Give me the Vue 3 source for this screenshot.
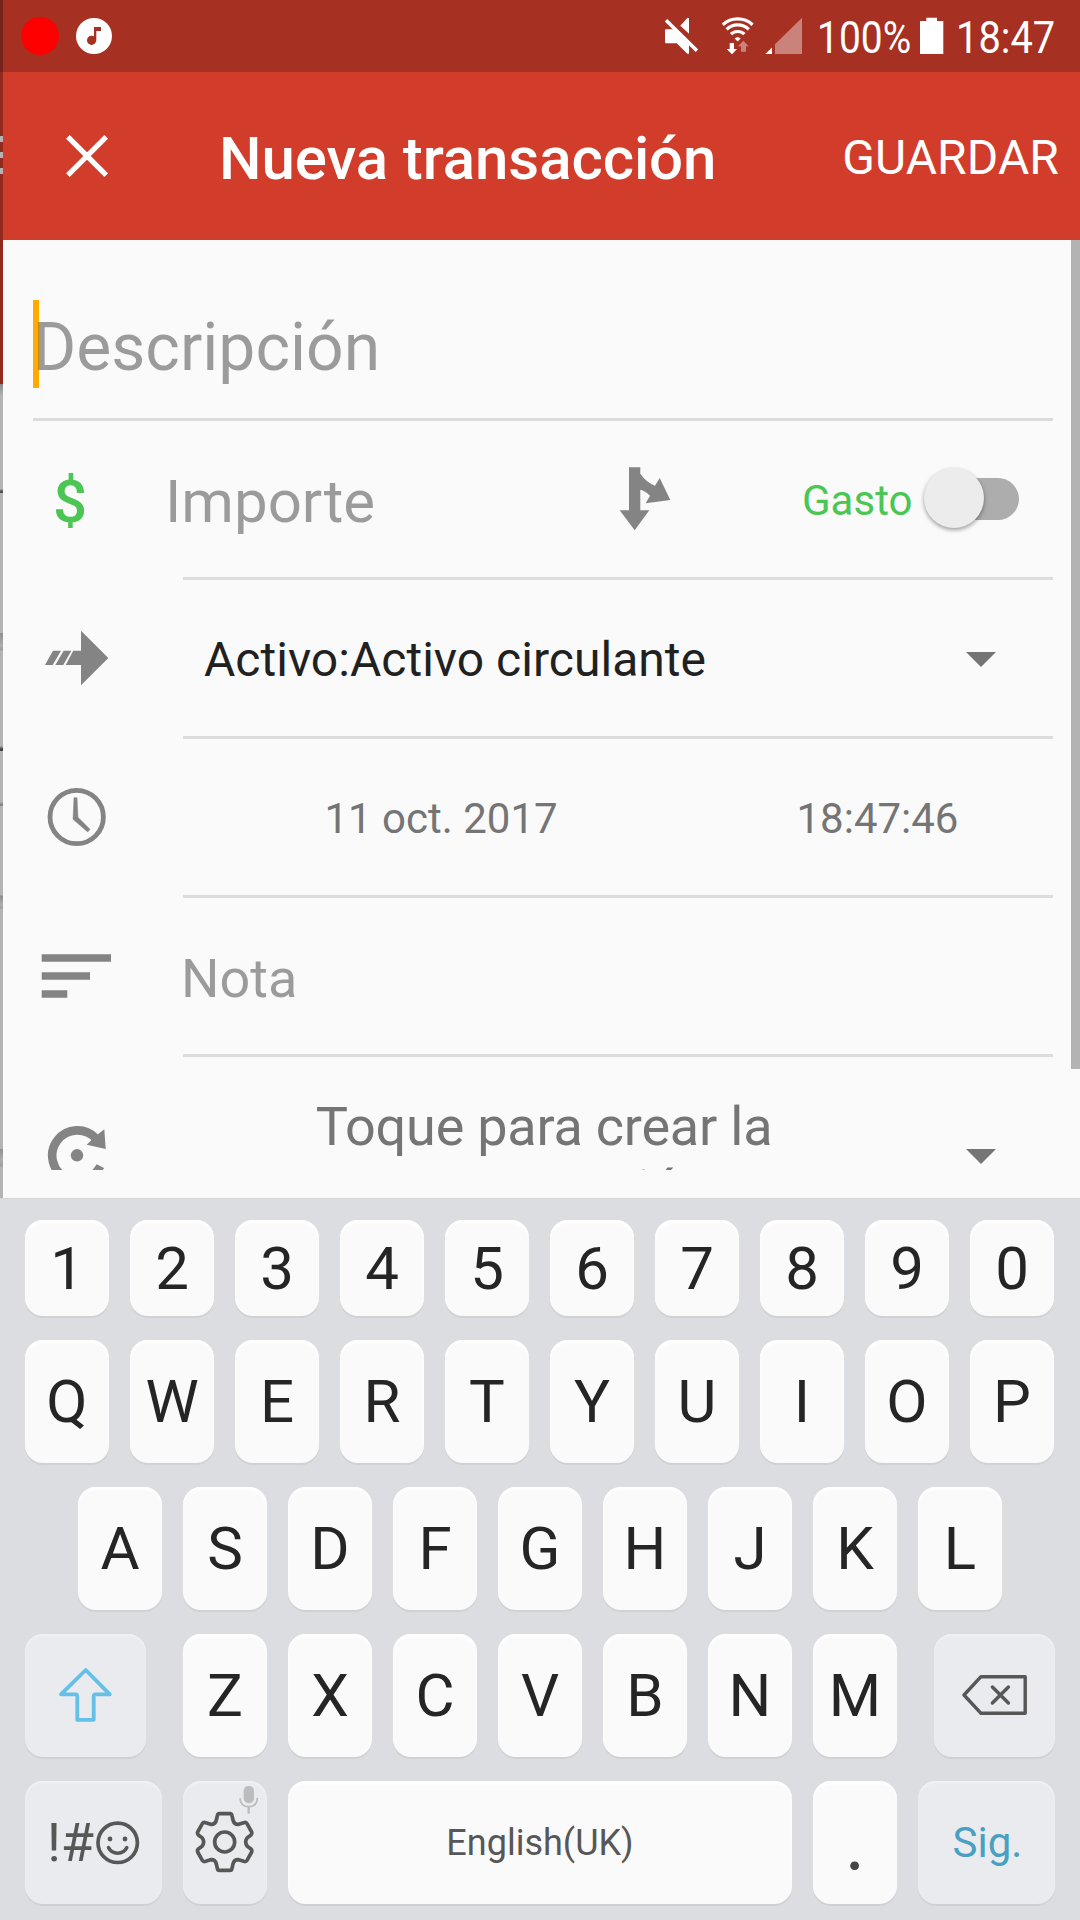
<script setup>
const digits = [...'1234567890']
const top = [...'QWERTYUIOP']
const middle = [...'ASDFGHJKL']
const bottom = [...'ZXCVBNM']
</script>

<template>
  <div class="screen">
    <div class="app">
      <div class="edge"></div>
      <div class="activity">
        <header class="status">
          <svg class="notif" viewBox="3 0 120 72" width="120" height="72">
            <circle cx="40" cy="36" r="19" fill="#ff0000" />
            <circle cx="94" cy="36" r="18" fill="#fff" />
            <path d="M94 27H101V31H96.3V40.3H94Z" fill="#a63021" />
            <circle cx="91.6" cy="40.3" r="4.6" fill="#a63021" />
          </svg>
          <svg viewBox="660 0 150 72" width="150" height="72">
            <path d="M665 30.3Q665 29.3 666 29.3H675L689 43.5V53.7H687.3L676.7 43.3H666Q665 43.3 665 42.3ZM689 18V33.7L680.3 25.7L687.3 18Z" fill="#fff" />
            <path d="M666 20.3L697 50.8" stroke="#fff" stroke-width="3.6" />
            <g fill="none" stroke="#fff" stroke-width="3.2">
              <path d="M722.8 24.7A22 22 0 0 1 752.6 24.7" />
              <path d="M726.6 29.4A16 16 0 0 1 748.8 29.4" />
              <path d="M731 34.2A9.6 9.6 0 0 1 744.4 34.2" />
            </g>
            <path d="M734.6 38.6Q737.7 36 740.7 38.6L737.7 41.6Z" fill="#fff" />
            <path d="M729.7 43H734V49H737L732 54.2L726.7 49H729.7Z" fill="#fff" />
            <path d="M743.3 40.7L748.7 46.2H746V51.8H741V46.2H738Z" fill="#c9837a" />
            <path d="M765.3 54L772 47.5V54Z" fill="#fff" />
            <path d="M775 54V44.3L802 17.7V54Z" fill="#c9837a" />
          </svg>
          <span class="stat battery-text">100%</span>
          <svg viewBox="915 0 43 72" width="43" height="72">
            <path d="M920 21H926.3V17.7H937V21H943.3V54H920Z" fill="#fff" />
          </svg>
          <span class="stat clock-text">18:47</span>
        </header>

        <div class="toolbar">
          <svg viewBox="3 72 210 168" width="210" height="168">
            <path d="M67.9 136.8L106.2 175.1M106.2 136.8L67.9 175.1" stroke="#fff" stroke-width="5.2" />
          </svg>
          <h1>Nueva transacción</h1>
          <span class="save">GUARDAR</span>
        </div>

        <main class="form">
          <div class="row description">
            <span class="caret"></span>
            <span class="hint big">Descripción</span>
          </div>
          <div class="rule full"></div>

          <div class="row">
            <span class="currency">$</span>
            <span class="hint amount">Importe</span>
            <svg class="split" viewBox="610 421 70 156" width="70" height="156">
              <path d="M629 467.3H640.3V473.7Q646 482 655 485.7L659.7 478L670.3 500L645.7 503.3L650 495.7Q645 490.5 640.3 489.7V510.3H649.3L634.7 530.3L619.7 510.3H629Z" fill="#848484" />
            </svg>
            <span class="type">Gasto</span>
            <span class="switch"><span class="thumb"></span></span>
          </div>
          <div class="rule"></div>

          <div class="row">
            <svg class="icon" viewBox="33 580 150 156" width="150" height="156">
              <path d="M81 630.7L108.3 658L81 685.3V665H65.7L73.3 650.7H81ZM63.7 650.7H71.3L63.3 665H55.3ZM53 650.7H61L52.7 665H45Z" fill="#848484" />
            </svg>
            <span class="account">Activo:Activo circulante</span>
            <svg class="drop" viewBox="966 0 30 15" width="30" height="15"><path d="M966 0H996L981 15Z" fill="#757575" /></svg>
          </div>
          <div class="rule"></div>

          <div class="row">
            <svg class="icon" viewBox="33 739 150 156" width="150" height="156">
              <circle cx="76.7" cy="817" r="26.7" fill="none" stroke="#848484" stroke-width="4.8" />
              <path d="M74 797.7H77L78 817.3L90 829.3L87.7 832L73 819.3Z" fill="#848484" stroke="#848484" stroke-width=".5" stroke-linejoin="round" />
            </svg>
            <span class="date">11 oct. 2017</span>
            <span class="time">18:47:46</span>
          </div>
          <div class="rule"></div>

          <div class="row">
            <svg class="icon" viewBox="33 898 150 156" width="150" height="156">
              <path d="M41.7 954.3H111V961.7H41.7ZM41.7 972.2H90V979.8H41.7ZM41.7 990.2H67.3V997.8H41.7Z" fill="#848484" />
            </svg>
            <span class="hint note">Nota</span>
          </div>
          <div class="rule"></div>

          <div class="row recurrence">
            <svg class="icon" viewBox="33 1057 150 113" width="150" height="113">
              <path d="M66 1178A25.2 25.2 0 1 1 96 1138.5" fill="none" stroke="#848484" stroke-width="8.6" />
              <circle cx="77" cy="1155.3" r="6.2" fill="#848484" />
              <path d="M104.3 1129.3L105.7 1149L86.7 1144.7L92 1139.5L98.3 1134ZM96.7 1164.3L104 1168L102.5 1171H91.8Z" fill="#848484" />
            </svg>
            <span class="repeat">Toque para crear la programación</span>
            <svg class="drop" viewBox="966 0 30 15" width="30" height="15"><path d="M966 0H996L981 15Z" fill="#757575" /></svg>
          </div>
          <div class="scrollbar"></div>
        </main>
      </div>
    </div>

    <div class="keyboard">
      <div class="keys digits"><span v-for="k in digits" :key="k" class="key">{{ k }}</span></div>
      <div class="keys"><span v-for="k in top" :key="k" class="key">{{ k }}</span></div>
      <div class="keys mid"><span v-for="k in middle" :key="k" class="key">{{ k }}</span></div>
      <div class="keys">
        <span class="key fn shift">
          <svg viewBox="25 1634 121 123" width="121" height="123">
            <path d="M85.7 1670L109.8 1694.3H95.7Q93.7 1694.3 93.7 1696.3V1719.8H77.3V1696.3Q77.3 1694.3 75.3 1694.3H61Z" fill="none" stroke="#64c0e6" stroke-width="3.8" stroke-linejoin="round" />
          </svg>
        </span>
        <span v-for="k in bottom" :key="k" class="key">{{ k }}</span>
        <span class="key fn erase">
          <svg viewBox="934 1634 121 123" width="121" height="123">
            <g fill="none" stroke="#575757" stroke-width="3.4" stroke-linejoin="round" stroke-linecap="round">
              <path d="M964 1695L981 1676.7H1025.2V1713.3H981Z" />
              <path d="M992.4 1687L1008.4 1703M1008.4 1687L992.4 1703" />
            </g>
          </svg>
        </span>
      </div>
      <div class="keys">
        <span class="key fn symbols">
          <span class="sym">!#</span>
          <svg viewBox="94 1818 48 48" width="48" height="48">
            <circle cx="117.7" cy="1841.8" r="19.7" fill="none" stroke="#575757" stroke-width="3.7" />
            <circle cx="110" cy="1838" r="2.4" fill="#575757" />
            <circle cx="125" cy="1838" r="2.4" fill="#575757" />
            <path d="M108.5 1846.6A10.3 10.3 0 0 0 126.8 1846.6" fill="none" stroke="#575757" stroke-width="3.5" stroke-linecap="round" />
          </svg>
        </span>
        <span class="key fn">
          <svg viewBox="549 543 252 369" width="84" height="123">
            <g fill="none" stroke="#575757" stroke-width="11" stroke-linejoin="round">
              <circle cx="674" cy="726" r="30" />
              <path d="M658 641H690Q695 641 696 647L699 660Q702 674 716 673L731 668Q738 666 741 671L755 696Q757 701 752 706L742 713Q732 726 742 739L752 746Q757 751 755 756L741 781Q738 786 731 784L716 779Q702 778 699 792L696 805Q695 811 690 811H658Q653 811 652 805L649 792Q646 778 632 779L617 784Q610 786 607 781L593 756Q591 751 596 746L606 739Q616 726 606 713L596 706Q591 701 593 696L607 671Q610 666 617 668L632 673Q646 674 649 660L652 647Q653 641 658 641Z" />
            </g>
            <rect x="731" y="558" width="31" height="52" rx="15" fill="#bbbcbe" />
            <path d="M720 594Q721 620 746 620Q771 620 772 594" fill="none" stroke="#bbbcbe" stroke-width="5" />
            <path d="M746 620V641" stroke="#bbbcbe" stroke-width="7" />
          </svg>
        </span>
        <span class="key space">English(UK)</span>
        <span class="key dot">.</span>
        <span class="key fn next">Sig.</span>
      </div>
    </div>
  </div>
</template>

<style>
body {
  margin: 0;
}
</style>

<style scoped>
.screen {
  width: 1080px;
  height: 1920px;
  overflow: hidden;
  font-family: Roboto, "Noto Sans", sans-serif;
  background: #fafafa;
}
svg {
  display: block;
  flex: none;
}
.app {
  display: flex;
  height: 1198px;
}
.edge {
  width: 3px;
  flex: none;
  background: linear-gradient(
    #74221a 0 72px, #922b1e 72px 136px,
    #b3b3b3 136px 142px, #922b1e 142px 152px,
    #b3b3b3 152px 158px, #922b1e 158px 168px,
    #b3b3b3 168px 174px, #922b1e 174px 384px,
    #888 384px, #a6a6a6 392px, #b4b4b4 396px 489px,
    #555 491px 493px, #b4b4b4 493px 633px,
    #8f8f8f 633px, #afafaf 646px, #9d9d9d 650px, #b4b4b4 651px 746px,
    #444 749px 751px, #b4b4b4 751px 802px,
    #888 804px 806px, #b4b4b4 806px 895px,
    #8f8f8f 896px, #afafaf 905px, #9d9d9d 908px, #b4b4b4 909px 1149px,
    #8f8f8f 1149px, #afafaf 1160px, #9d9d9d 1166px, #b4b4b4 1167px
  );
}
.activity {
  width: 1077px;
}
.status {
  display: flex;
  align-items: center;
  height: 72px;
  background: #a63021;
  color: #fff;
}
.notif {
  margin-right: 537px;
}
.stat {
  flex: none;
  font-size: 45px;
  line-height: 53px;
  transform: scaleX(.865);
  transform-origin: 0 50%;
  white-space: nowrap;
}
.battery-text {
  width: 98px;
  margin-left: 7px;
  padding-top: 2px;
}
.clock-text {
  width: 120px;
  margin-left: -2px;
  padding-top: 2px;
  transform: scaleX(.885);
}
.toolbar {
  display: flex;
  align-items: center;
  height: 168px;
  background: #d13d2a;
  color: #fff;
}
.toolbar h1 {
  flex: 1;
  margin: 0 0 0 6px;
  padding-top: 5px;
  font-size: 60px;
  line-height: 70px;
  font-weight: 500;
  letter-spacing: -.08px;
  white-space: nowrap;
}
.save {
  padding: 3px 21px 0 0;
  font-size: 48px;
  line-height: 56px;
  letter-spacing: .1px;
}
.form {
  position: relative;
  height: 958px;
  background: #fafafa;
}
.row {
  display: flex;
  align-items: center;
  height: 156px;
  padding-left: 30px;
}
.rule {
  height: 3px;
  margin: 0 27px 0 180px;
  background: #dcdcdc;
}
.rule.full {
  margin-left: 30px;
}
.description {
  height: 178px;
}
.caret {
  position: absolute;
  left: 30px;
  top: 60px;
  width: 6px;
  height: 88px;
  background: #ffab00;
}
.hint {
  position: relative;
  color: rgba(0, 0, 0, .38);
}
.big {
  padding-top: 37px;
  font-size: 66px;
  line-height: 77px;
}
.currency {
  width: 112px;
  padding: 6px 0 0 20px;
  font-size: 60px;
  line-height: 70px;
  font-weight: 500;
  color: #4bc655;
}
.amount {
  width: 445px;
  padding-top: 5px;
  font-size: 60px;
  line-height: 70px;
}
.type {
  width: 122px;
  margin-left: 122px;
  padding-top: 3px;
  font-size: 42px;
  line-height: 49px;
  color: #4bc655;
}
.switch {
  display: flex;
  align-items: center;
  width: 95px;
  height: 42px;
  border-radius: 21px;
  background: linear-gradient(90deg, transparent 0 45px, #adadad 45px);
}
.thumb {
  width: 60px;
  height: 60px;
  flex: none;
  margin-top: -2px;
  border-radius: 50%;
  background: #ececec;
  box-shadow: 0 2px 4px rgba(0, 0, 0, .38);
}
.account {
  width: 783px;
  padding: 3px 0 0 21px;
  box-sizing: border-box;
  font-size: 48px;
  line-height: 56px;
  letter-spacing: .03px;
  color: #212121;
}
.drop {
  margin-top: 3px;
}
.date,
.time {
  padding-top: 3px;
  font-size: 42px;
  line-height: 49px;
  color: #757575;
  text-align: center;
}
.date {
  width: 516px;
}
.time {
  width: 357px;
}
.note {
  padding: 5px 0 0 0;
  margin-left: -2px;
  font-size: 54px;
  line-height: 63px;
}
.recurrence {
  height: 113px;
  overflow: hidden;
  align-items: flex-start;
}
.repeat {
  width: 510px;
  margin-left: 106px;
  margin-right: 167px;
  padding-top: 38px;
  font-size: 54px;
  line-height: 63px;
  letter-spacing: -.22px;
  color: #757575;
  text-align: center;
}
.recurrence .drop {
  margin-top: 92px;
}
.scrollbar {
  position: absolute;
  right: 0;
  top: 0;
  width: 9px;
  height: 829px;
  background: #b3b3b3;
}
.keyboard {
  display: flex;
  flex-direction: column;
  gap: 24px;
  box-sizing: border-box;
  height: 722px;
  padding: 21px 25px 0;
  border-top: 1px solid #d5d6d8;
  background: #dcdde1;
}
.keys {
  display: flex;
  gap: 21px;
  height: 123px;
}
.digits {
  height: 96px;
}
.mid {
  padding-left: 53px;
}
.key {
  display: flex;
  align-items: center;
  justify-content: center;
  box-sizing: border-box;
  width: 84px;
  flex: none;
  border-radius: 18px;
  background: #fafafa;
  box-shadow: 0 2px 0 #d0d1d5, inset 0 3px 3px #fff;
  font-size: 60px;
  line-height: 70px;
  color: #252525;
}
.digits .key {
  padding-top: 2px;
}
.fn {
  background: #e9ebef;
  box-shadow: 0 2px 0 #d0d1d5, inset 0 2px 2px #f1f2f4;
  color: #575757;
}
.shift {
  width: 121px;
  margin-right: 16px;
}
.erase {
  width: 121px;
  margin-left: 16px;
}
.symbols {
  width: 137px;
  padding-left: 2px;
}
.sym {
  font-size: 54px;
  line-height: 63px;
}
.space {
  width: 504px;
  font-size: 36px;
  color: #575757;
}
.dot {
  padding-top: 2px;
  font-size: 78px;
  color: #454545;
}
.next {
  width: 137px;
  padding-left: 2px;
  font-size: 42px;
  color: #4aa0c1;
}
</style>
